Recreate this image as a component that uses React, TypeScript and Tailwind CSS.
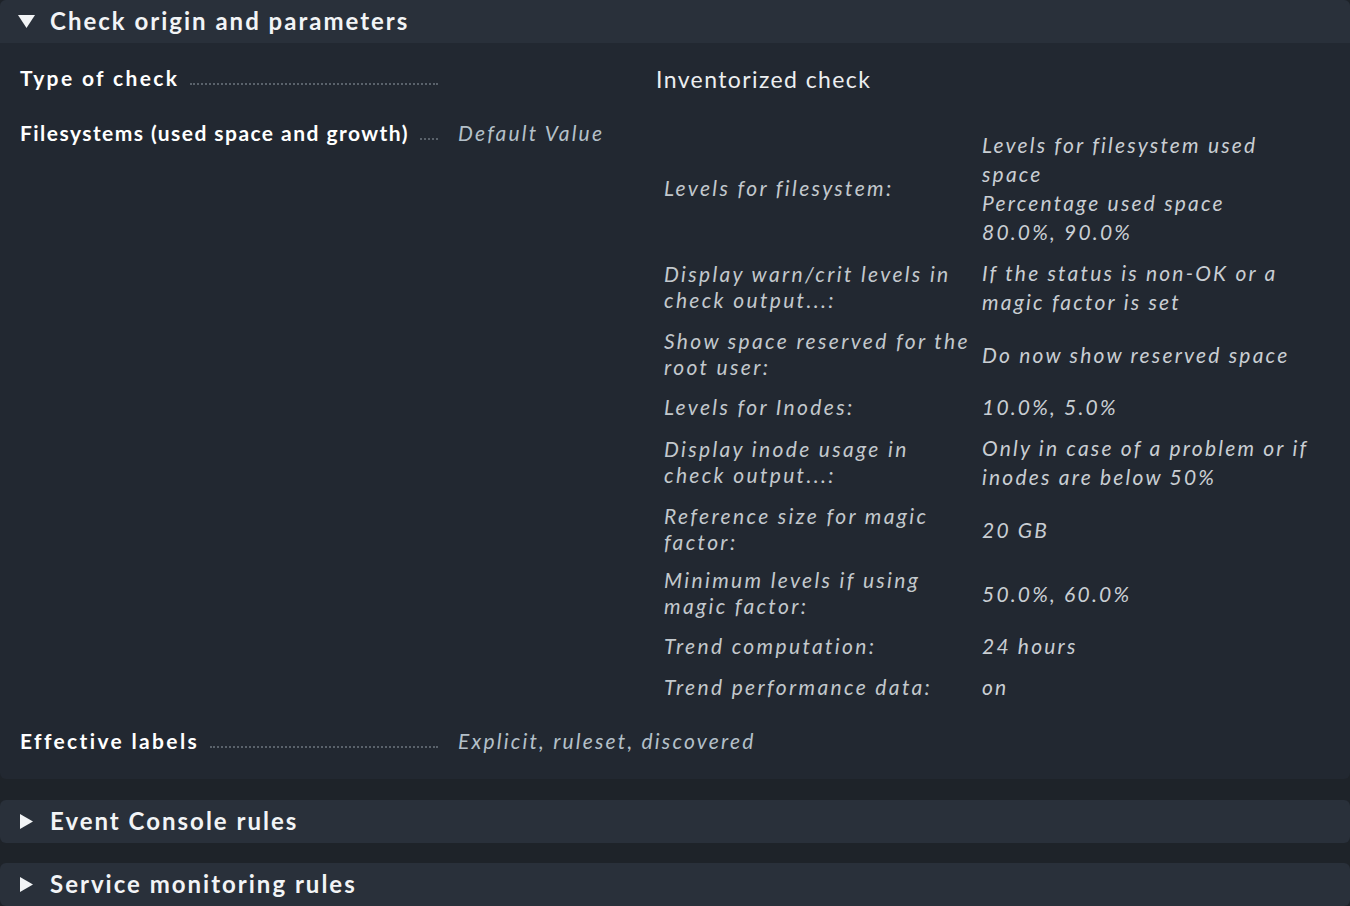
import React from 'react';

const params: { label: string[]; value: string[] }[] = [
  { label: ['Levels for filesystem:'], value: ['Levels for filesystem used', 'space', 'Percentage used space', '80.0%, 90.0%'] },
  { label: ['Display warn/crit levels in', 'check output...:'], value: ['If the status is non-OK or a', 'magic factor is set'] },
  { label: ['Show space reserved for the', 'root user:'], value: ['Do now show reserved space'] },
  { label: ['Levels for Inodes:'], value: ['10.0%, 5.0%'] },
  { label: ['Display inode usage in', 'check output...:'], value: ['Only in case of a problem or if', 'inodes are below 50%'] },
  { label: ['Reference size for magic', 'factor:'], value: ['20 GB'] },
  { label: ['Minimum levels if using', 'magic factor:'], value: ['50.0%, 60.0%'] },
  { label: ['Trend computation:'], value: ['24 hours'] },
  { label: ['Trend performance data:'], value: ['on'] },
];

const DownTriangle = () => (
  <svg width="17" height="14" viewBox="0 0 17 14" className="shrink-0">
    <polygon points="0,1 17,1 8.5,14" fill="#f2f4f6" />
  </svg>
);

const RightTriangle = () => (
  <svg width="13" height="15" viewBox="0 0 13 15" className="shrink-0">
    <polygon points="0,0 13,7.5 0,15" fill="#f2f4f6" />
  </svg>
);

const Label: React.FC<{ text: string; tight?: boolean }> = ({ text, tight }) => (
  <div className="w-[418px] shrink-0 flex items-end h-[24px]">
    <span
      className={
        'text-[21px] leading-[24px] font-bold text-white whitespace-nowrap ' +
        (tight ? 'tracking-[1.45px]' : 'tracking-[2.35px]')
      }
    >
      {text}
    </span>
    <div className="flex-1 ml-[11px] mb-[5px] border-b-2 border-dotted border-[#5a626b]" />
  </div>
);

const CollapsedHeader: React.FC<{ title: string }> = ({ title }) => (
  <div className="h-[43px] bg-[#29303a] rounded-[6px] flex items-center pl-[20px] gap-[17px] pb-[1px]">
    <RightTriangle />
    <span className="text-[24px] leading-[28px] font-bold tracking-[2px] text-[#f2f4f6]">{title}</span>
  </div>
);

export default function App() {
  return (
    <div className="min-h-screen w-full bg-[#1e2329] font-['Lato','Noto_Sans',sans-serif] overflow-hidden">
      <div className="rounded-[6px] overflow-hidden bg-[#222831]">
        <div className="h-[43px] bg-[#29303a] flex items-center pl-[18px] gap-[15px] pb-[1px]">
          <DownTriangle />
          <span className="text-[24px] leading-[28px] font-bold tracking-[2px] text-[#f2f4f6]">Check origin and parameters</span>
        </div>

        <div className="px-[20px] pt-[23px] pb-[26px]">
          <div className="flex items-start">
            <Label text="Type of check" />
            <div className="ml-[20px] pl-[198px] h-[24px] text-[23px] leading-[26px] tracking-[1.4px] text-[#eceef0] whitespace-nowrap">
              Inventorized check
            </div>
          </div>

          <div className="flex items-start mt-[31px]">
            <Label text="Filesystems (used space and growth)" tight />
            <div className="ml-[20px] flex items-start">
              <div className="w-[206px] shrink-0 text-[21px] leading-[24px] italic tracking-[2.2px] text-[#b4c0c9] whitespace-nowrap">
                Default Value
              </div>
              <table className="mt-[3px] border-collapse">
                <tbody>
                  {params.map((p, i) => (
                    <tr key={i}>
                      <td className="w-[318px] py-[6px] align-middle">
                        <div className="text-[21px] leading-[26px] italic tracking-[2.35px] text-[#c3c8cd] whitespace-nowrap">
                          {p.label.map((l, j) => (
                            <div key={j}>{l}</div>
                          ))}
                        </div>
                      </td>
                      <td className="py-[6px] align-middle pr-[20px]">
                        <div className="text-[21px] leading-[29px] italic tracking-[2.2px] text-[#c9ced3] whitespace-nowrap">
                          {p.value.map((v, j) => (
                            <div key={j}>{v}</div>
                          ))}
                        </div>
                      </td>
                    </tr>
                  ))}
                </tbody>
              </table>
            </div>
          </div>

          <div className="flex items-start mt-[22px]">
            <Label text="Effective labels" />
            <div className="ml-[20px] text-[21px] leading-[24px] italic tracking-[2.2px] text-[#b4c0c9] whitespace-nowrap">
              Explicit, ruleset, discovered
            </div>
          </div>
        </div>
      </div>

      <div className="mt-[21px]">
        <CollapsedHeader title="Event Console rules" />
      </div>
      <div className="mt-[20px]">
        <CollapsedHeader title="Service monitoring rules" />
      </div>
    </div>
  );
}
